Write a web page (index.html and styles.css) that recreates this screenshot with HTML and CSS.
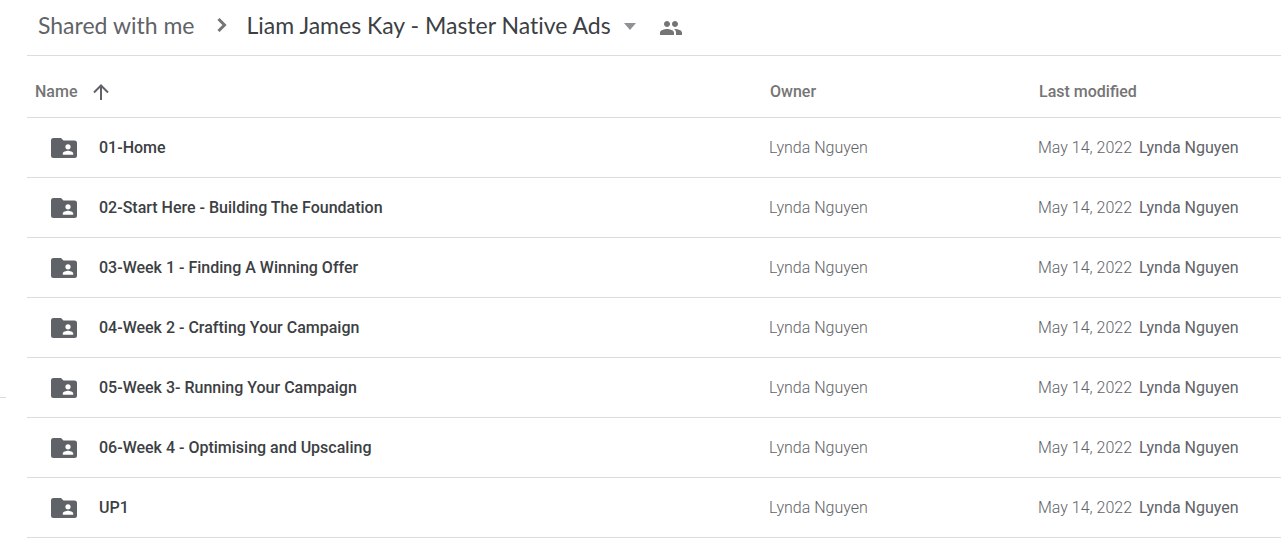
FILE: index.html
```html
<!DOCTYPE html>
<html lang="en">
<head>
<meta charset="UTF-8">
<title>Liam James Kay - Master Native Ads</title>
<meta name="viewport" content="width=device-width, initial-scale=1.0">
<link rel="stylesheet" href="styles.css">
</head>

<body>

<svg class="sprite" aria-hidden="true">
<symbol id="folder" viewBox="0 0 26 20">
<path fill-rule="evenodd" d="M2.5 0H10l2.5 2.5h11A2.5 2.5 0 0 1 26 5v12.500a2.500 2.500 0 0 1-2.500 2.500h-21A2.500 2.500 0 0 1 0 17.500v-15A2.500 2.500 0 0 1 2.500 0zM17 6.200a2.600 2.600 0 1 0 0 5.200 2.600 2.600 0 0 0 0-5.200zM11.800 16.800h10.400v-1.400c0-1.800-3.500-2.700-5.200-2.700s-5.200.9-5.200 2.700z"/>
</symbol>
</svg>

<div class="layout">
<aside class="side"></aside>

<main class="main">
<nav class="crumbs" aria-label="Breadcrumb">
<a href="#">Shared with me</a>
<svg class="chevron" viewBox="0 0 10 14"><path d="M1.500 1l6 6-6 6"/></svg>
<button class="current" type="button">Liam James Kay - Master Native Ads
<svg class="caret" viewBox="0 0 12 7"><path d="M0 0h12L6 7z"/></svg>
</button>
<button class="people" type="button" aria-label="Manage access">
<svg viewBox="1 5 22 14"><path d="M16 11c1.660 0 2.990-1.340 2.990-3S17.660 5 16 5s-3 1.340-3 3 1.340 3 3 3zm-8 0c1.660 0 2.990-1.340 2.990-3S9.660 5 8 5 5 6.340 5 8s1.340 3 3 3zm0 2c-2.330 0-7 1.170-7 3.500V19h14v-2.500c0-2.330-4.670-3.500-7-3.500zm8 0c-.29 0-.62.02-.97.05 1.160.84 1.970 1.970 1.970 3.450V19h6v-2.500c0-2.330-4.670-3.500-7-3.500z"/></svg>
</button>
</nav>

<table class="files">
<colgroup><col><col class="col-owner"><col class="col-date"></colgroup>
<thead>
<tr>
<th><button class="sort" type="button">Name <svg viewBox="0 0 16 16"><path d="M8 16V2M1 8.500l7-7 7 7"/></svg></button></th>
<th>Owner</th>
<th>Last modified</th>
</tr>
</thead>
<tbody>
<tr>
<td><div class="name"><svg><use href="#folder"/></svg>01-Home</div></td>
<td>Lynda Nguyen</td>
<td>May 14, 2022 <span class="by">Lynda Nguyen</span></td>
</tr>
<tr>
<td><div class="name"><svg><use href="#folder"/></svg>02-Start Here - Building The Foundation</div></td>
<td>Lynda Nguyen</td>
<td>May 14, 2022 <span class="by">Lynda Nguyen</span></td>
</tr>
<tr>
<td><div class="name"><svg><use href="#folder"/></svg>03-Week 1 - Finding A Winning Offer</div></td>
<td>Lynda Nguyen</td>
<td>May 14, 2022 <span class="by">Lynda Nguyen</span></td>
</tr>
<tr>
<td><div class="name"><svg><use href="#folder"/></svg>04-Week 2 - Crafting Your Campaign</div></td>
<td>Lynda Nguyen</td>
<td>May 14, 2022 <span class="by">Lynda Nguyen</span></td>
</tr>
<tr>
<td><div class="name"><svg><use href="#folder"/></svg>05-Week 3- Running Your Campaign</div></td>
<td>Lynda Nguyen</td>
<td>May 14, 2022 <span class="by">Lynda Nguyen</span></td>
</tr>
<tr>
<td><div class="name"><svg><use href="#folder"/></svg>06-Week 4 - Optimising and Upscaling</div></td>
<td>Lynda Nguyen</td>
<td>May 14, 2022 <span class="by">Lynda Nguyen</span></td>
</tr>
<tr>
<td><div class="name"><svg><use href="#folder"/></svg>UP1</div></td>
<td>Lynda Nguyen</td>
<td>May 14, 2022 <span class="by">Lynda Nguyen</span></td>
</tr>
</tbody>
</table>
</main>
</div>

</body>
</html>
```
FILE: styles.css
```css
*{box-sizing:border-box}
body{margin:0;font-family:Roboto,"Liberation Sans",sans-serif;font-size:16px;line-height:20px;background:#fff;color:#3c4043}
button{border:0;padding:0;background:none;font:inherit;color:inherit;cursor:pointer}
.sprite{display:none}

.layout{display:flex}
.side{width:27px;flex:none}
/* end of the sidebar divider */
.side::before{content:"";display:block;width:6px;height:1px;margin-top:397px;background:#dadce0}
.main{flex:1;min-width:0}

.crumbs{display:flex;align-items:center;height:56px;padding:0 0 6px 11px;border-bottom:1px solid #dadce0;font-family:"Google Sans",Lato,sans-serif;font-size:23px;line-height:28px;font-variant-ligatures:none;white-space:nowrap}
.crumbs a{color:#5f6368;text-decoration:none}
.chevron{width:10px;height:14px;margin:0 20px 0 22px;fill:none;stroke:#757575;stroke-width:3}
.current{display:flex;align-items:center;gap:13px}
.caret{width:12px;height:7px;margin-top:4px;fill:#8f9194}
.people{display:flex;margin:6px 0 0 24px}
.people svg{width:22px;height:14px;fill:#757575}

.files{width:100%;table-layout:fixed;border-collapse:separate;border-spacing:0}
.col-owner{width:269px}
.col-date{width:245px}
.files th{height:62px;padding:10px 0 0 3px;border-bottom:1px solid #dadce0;text-align:left;font-weight:500;color:#757575}
.files th:first-child{padding-left:8px}
.files td{height:60px;padding:0 0 0 2px;border-bottom:1px solid #dadce0;font-weight:300;color:#5f6368;white-space:nowrap}
.files td:first-child{padding-left:24px}
.sort{display:flex;align-items:center;gap:16px}
.sort svg{width:16px;height:16px;fill:none;stroke:#5f6368;stroke-width:2}
.name{display:flex;align-items:center;gap:22px;font-weight:500;color:#3c4043}
.name svg{width:26px;height:20px;fill:#5f6368}
.by{margin-left:3px;font-weight:400}
```
